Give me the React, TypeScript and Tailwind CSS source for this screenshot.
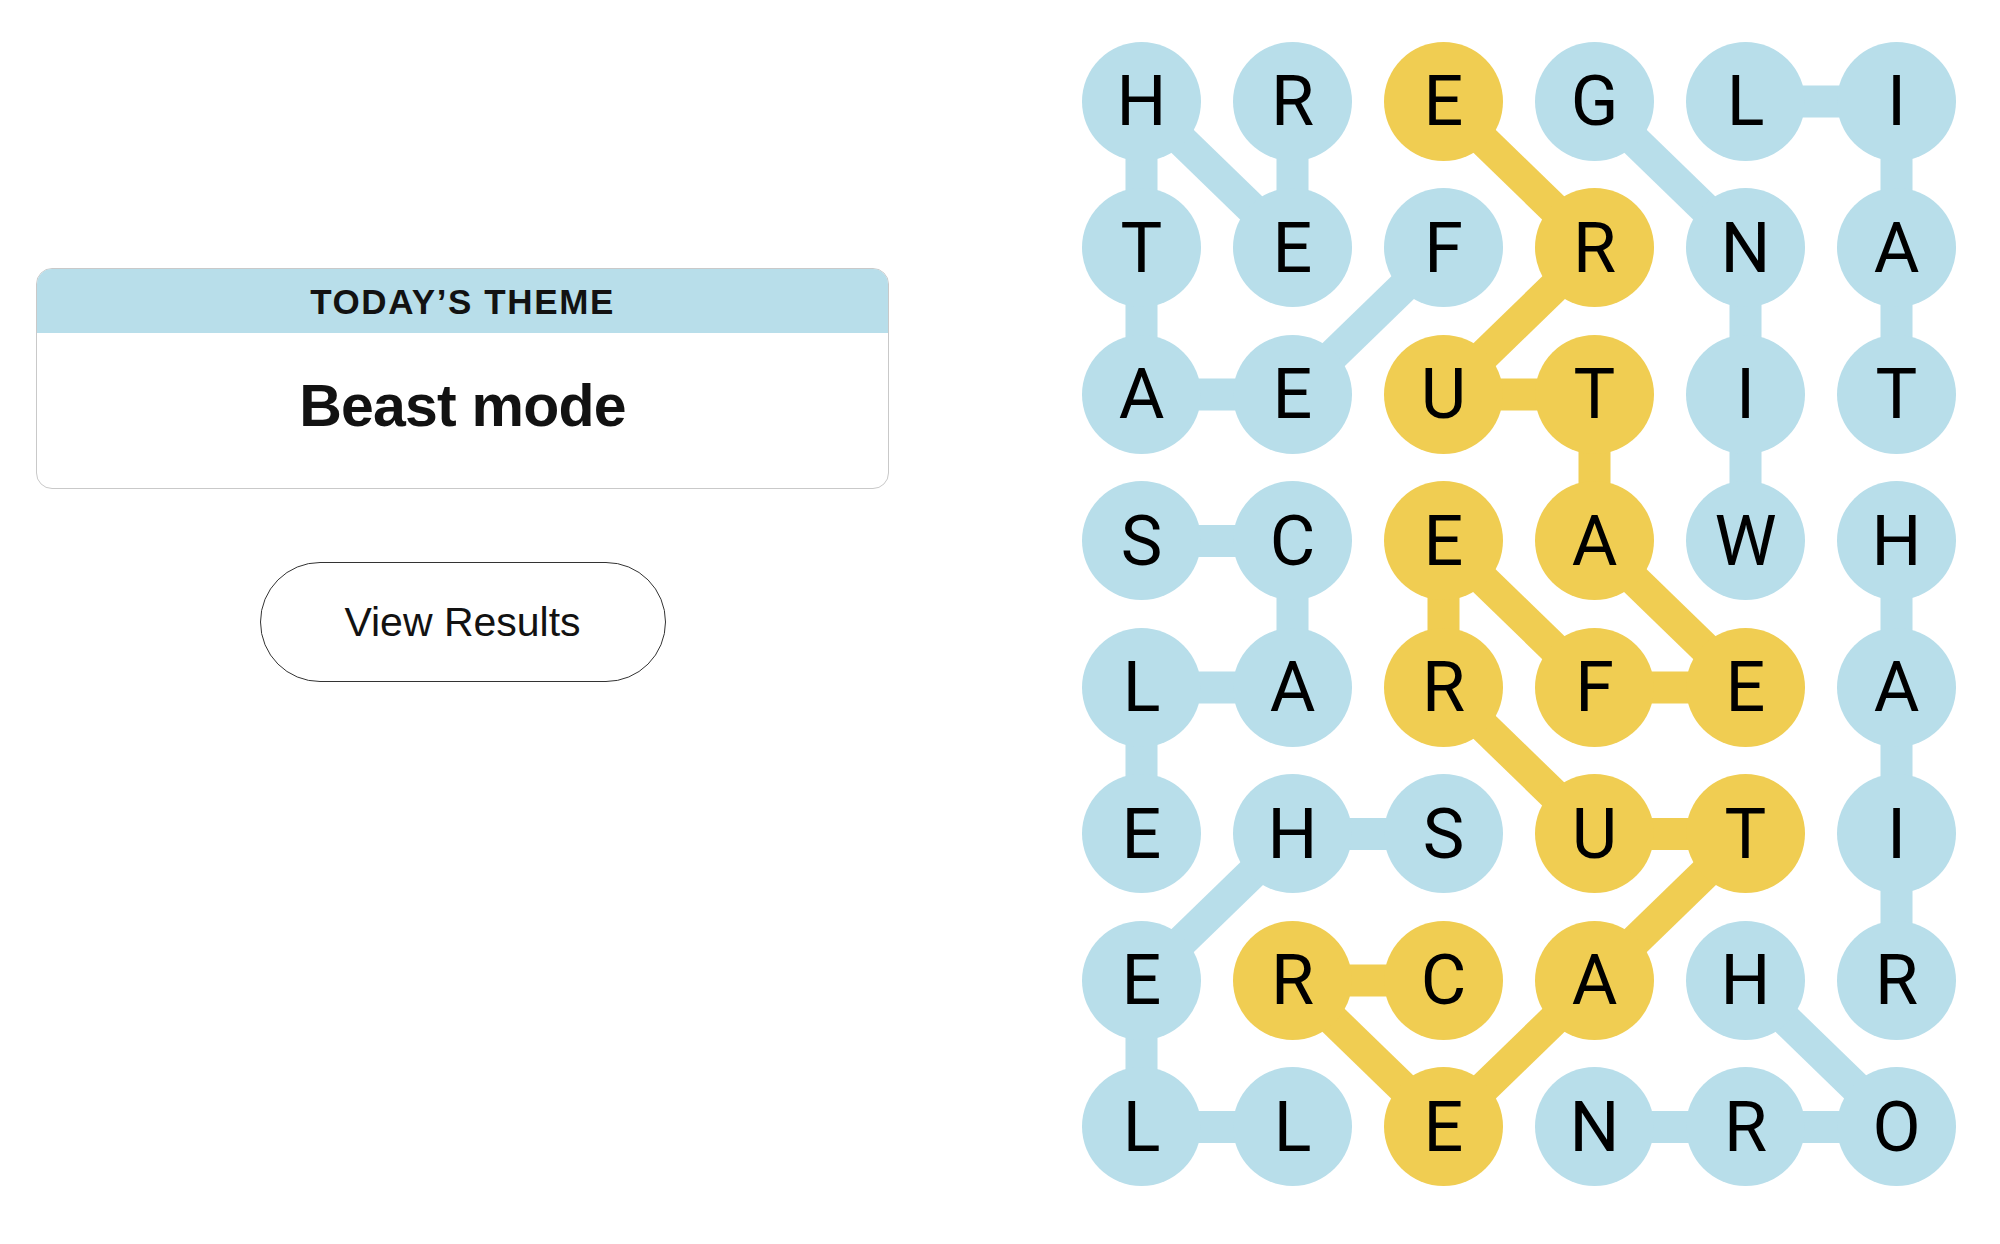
import React from "react";

const LETTERS = [
  "HREGLI",
  "TEFRNA",
  "AEUTIT",
  "SCEAWH",
  "LARFEA",
  "EHSUTI",
  "ERCAHR",
  "LLENRO",
];

const YELLOW = new Set([
  "0,2", "1,3", "2,2", "2,3", "3,2", "3,3", "4,2", "4,3", "4,4", "5,3", "5,4", "6,1", "6,2", "6,3", "7,2",
]);

const BLUE_LINES: number[][] = [
  [1, 2, 2, 1], [2, 1, 2, 0], [2, 0, 1, 0], [1, 0, 0, 0], [0, 0, 1, 1], [1, 1, 0, 1],
  [3, 4, 2, 4], [2, 4, 1, 4], [1, 4, 0, 3],
  [2, 5, 1, 5], [1, 5, 0, 5], [0, 5, 0, 4],
  [3, 5, 4, 5], [4, 5, 5, 5], [5, 5, 6, 5],
  [3, 0, 3, 1], [3, 1, 4, 1], [4, 1, 4, 0], [4, 0, 5, 0],
  [5, 2, 5, 1], [5, 1, 6, 0], [6, 0, 7, 0], [7, 0, 7, 1],
  [6, 4, 7, 5], [7, 5, 7, 4], [7, 4, 7, 3],
];

const YELLOW_LINES: number[][] = [
  [6, 2, 6, 1], [6, 1, 7, 2], [7, 2, 6, 3], [6, 3, 5, 4], [5, 4, 5, 3], [5, 3, 4, 2], [4, 2, 3, 2],
  [3, 2, 4, 3], [4, 3, 4, 4], [4, 4, 3, 3], [3, 3, 2, 3], [2, 3, 2, 2], [2, 2, 1, 3], [1, 3, 0, 2],
];

const BLUE = "#b8deea";
const GOLD = "#f0cd52";
const PX = 151;
const PY = 146.5;
const R = 59.5;

function cx(c: number) {
  return R + c * PX;
}
function cy(r: number) {
  return R + r * PY;
}

function Board() {
  return (
    <div className="relative mt-[41.5px] ml-[193px]">
      <svg className="absolute left-0 top-0" width={874} height={1146} viewBox="0 0 874 1146">
        {BLUE_LINES.map(([r1, c1, r2, c2], i) => (
          <line key={"b" + i} x1={cx(c1)} y1={cy(r1)} x2={cx(c2)} y2={cy(r2)} stroke={BLUE} strokeWidth={32} />
        ))}
        {YELLOW_LINES.map(([r1, c1, r2, c2], i) => (
          <line key={"y" + i} x1={cx(c1)} y1={cy(r1)} x2={cx(c2)} y2={cy(r2)} stroke={GOLD} strokeWidth={32} />
        ))}
      </svg>
      <div className="relative grid grid-cols-[repeat(6,119px)] gap-x-[32px] gap-y-[27.5px]">
        {LETTERS.map((row, r) =>
          row.split("").map((ch, c) => (
            <div
              key={r + "-" + c}
              className={
                "w-[119px] h-[119px] rounded-full flex items-center justify-center text-[70px] font-normal text-black leading-none " +
                (YELLOW.has(r + "," + c) ? "bg-[#f0cd52]" : "bg-[#b8deea]")
              }
              style={{ fontFamily: "Roboto, 'Liberation Sans', sans-serif" }}
            >
              {ch}
            </div>
          ))
        )}
      </div>
    </div>
  );
}

export default function App() {
  return (
    <div
      className="w-[2000px] h-[1244px] bg-white flex items-start overflow-hidden"
      style={{ fontFamily: "'Liberation Sans', Arial, sans-serif" }}
    >
      <div className="ml-[36px] mt-[268px] w-[853px] flex flex-col items-center">
        <div className="w-full rounded-[16px] border border-[#c9c9c9] overflow-hidden bg-white">
          <div className="h-[64px] bg-[#b8deea] flex items-center justify-center">
            <span className="text-[35px] font-bold tracking-[1.6px] text-[#121212] leading-none">TODAY’S THEME</span>
          </div>
          <div className="h-[155px] flex items-center justify-center pb-[8px]">
            <span className="text-[59px] font-bold text-[#121212] leading-none tracking-[-0.8px]">Beast mode</span>
          </div>
        </div>
        <button className="mt-[73px] w-[406px] h-[120px] rounded-full border-[1.5px] border-[#333] bg-white flex items-center justify-center">
          <span className="text-[41px] text-[#121212] leading-none">View Results</span>
        </button>
      </div>
      <Board />
    </div>
  );
}
